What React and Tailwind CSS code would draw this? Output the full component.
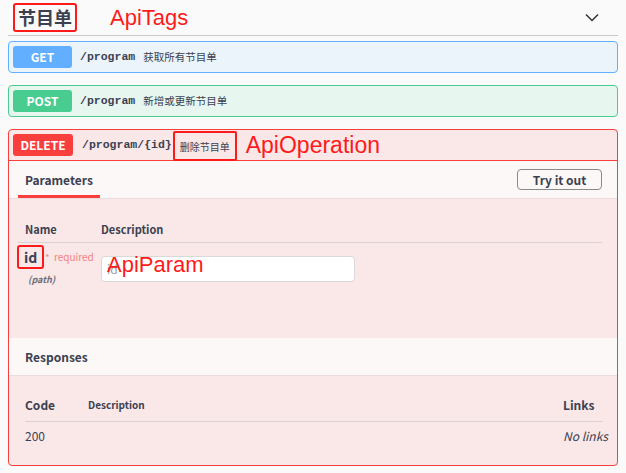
export default function App() {
  const Row = ({ method, path, desc, border, bg, badge }) => (
    <div className={`flex h-[32px] items-center rounded-[4px] border px-[4px] ${border} ${bg}`}>
      <span className={`flex h-[22px] w-[59px] items-center justify-center rounded-[3px] text-[12px] font-bold text-white ${badge}`}>
        {method}
      </span>
      <span className="ml-[8px] font-['Liberation_Mono',monospace] text-[11.5px] font-bold text-[#3b4151]">{path}</span>
      <span className="ml-[8px] text-[10.5px] text-[#3b4151]">{desc}</span>
    </div>
  );

  return (
    <div className="min-h-[473px] bg-[#fafafa] px-[8px] font-['Noto_Sans_CJK_SC',sans-serif] text-[#3b4151]">
      {/* Tag header */}
      <div className="flex h-[36px] items-center border-b border-[#c8c9cd] pl-[5px] pr-[19px]">
        <span className="rounded-[3px] border-2 border-[#ff1a1a] px-[3px] text-[18px] font-bold leading-[25px] text-[#3b4151]">
          节目单
        </span>
        <span className="ml-[33px] font-['Liberation_Sans',sans-serif] text-[22px] leading-none text-[#ff1a1a]">ApiTags</span>
        <svg className="ml-auto" width="14" height="9" viewBox="0 0 14 9" fill="none">
          <polyline points="1,1.5 7,7.5 13,1.5" stroke="#333" strokeWidth="1.5" />
        </svg>
      </div>

      <div className="mt-[5px] flex flex-col gap-[12px]">
        <Row method="GET" path="/program" desc="获取所有节目单" border="border-[#61affe]" bg="bg-[#ebf3fb]" badge="bg-[#61affe]" />
        <Row method="POST" path="/program" desc="新增或更新节目单" border="border-[#49cc90]" bg="bg-[#e8f6f0]" badge="bg-[#49cc90]" />

        {/* DELETE block */}
        <div className="h-[337px] overflow-hidden rounded-[4px] border border-[#f93e3e] bg-[#fae7e7]">
          <div className="flex h-[31px] items-center border-b border-[#f93e3e] px-[4px]">
            <span className="flex h-[22px] w-[60px] items-center justify-center rounded-[3px] bg-[#f93e3e] text-[12px] font-bold text-white">
              DELETE
            </span>
            <span className="ml-[9px] font-['Liberation_Mono',monospace] text-[11.5px] font-bold text-[#3b4151]">/program/{"{id}"}</span>
            <span className="ml-[1px] flex h-[30px] translate-y-[1px] items-center rounded-[2px] border-2 border-[#ff1a1a] px-[5px] text-[10px] text-[#3b4151]">
              删除节目单
            </span>
            <span className="ml-[9px] font-['Liberation_Sans',sans-serif] text-[23px] leading-none text-[#ff1a1a]">ApiOperation</span>
          </div>

          {/* Tabs */}
          <div className="flex h-[38px] items-stretch border-b border-[#ecdcdd] bg-[#fdf8f8] pl-[9px] pr-[15px]">
            <div className="flex items-center border-b-[3px] border-[#f93e3e] px-[7px] pt-[3px] text-[12px] font-bold">Parameters</div>
            <div className="ml-auto flex items-center">
              <button className="flex h-[21px] w-[85px] items-center justify-center rounded-[4px] border-[1.5px] border-[#8a8a8a] text-[12px] font-bold text-[#3b4151]">
                Try it out
              </button>
            </div>
          </div>

          {/* Parameters */}
          <div className="h-[139px] pl-[9px] pr-[15px] pt-[20px]">
            <div className="flex h-[24px] items-end border-b border-[#d9d0d2] pb-[6px] text-[11px] font-semibold leading-[14px]">
              <span className="w-[83px] pl-[7px]">Name</span>
              <span>Description</span>
            </div>
            <div className="flex">
              <div className="w-[83px]">
                <div className="-ml-[1px] mt-[2px] flex items-center">
                  <span className="rounded-[3px] border-2 border-[#ff1a1a] px-[5px] text-[14px] font-bold leading-[20px] text-[#3b4151]">id</span>
                  <span className="ml-[1px] text-[10px] leading-[12px] text-[#f98181]">
                    <span className="text-[9px]">*</span>&nbsp;&nbsp;required
                  </span>
                </div>
                <div className="mt-[5px] pl-[10px] text-[9px] font-semibold italic leading-[11px] text-[#6b6f7b]">(path)</div>
              </div>
              <div className="relative mt-[12px]">
                <input
                  className="h-[26px] w-[254px] rounded-[4px] border border-[#d9d9d9] bg-white px-[5px] text-[12px] outline-none placeholder:text-[#999]"
                  placeholder="id"
                  readOnly
                />
                <span className="absolute left-[6px] top-[-1px] font-['Liberation_Sans',sans-serif] text-[22px] leading-none text-[#ff1a1a]">
                  ApiParam
                </span>
              </div>
            </div>
          </div>

          {/* Responses header */}
          <div className="flex h-[38px] items-center border-b border-[#ecdcdd] bg-[#fdf8f8] pl-[16px] text-[12px] font-bold">
            Responses
          </div>

          {/* Responses body */}
          <div className="pl-[16px] pr-[14px] pt-[22px]">
            <div className="flex h-[24px] items-end border-b border-[#d9d0d2] pb-[8px] leading-[16px]">
              <span className="w-[63px] text-[12px] font-bold">Code</span>
              <span className="flex-1 text-[10px] font-semibold">Description</span>
              <span className="w-[40px] text-[12px] font-bold">Links</span>
            </div>
            <div className="flex pt-[6px] text-[12px] leading-[16px]">
              <span className="w-[63px]">200</span>
              <span className="flex-1"></span>
              <span className="w-[40px] whitespace-nowrap italic">No links</span>
            </div>
          </div>
        </div>
      </div>
    </div>
  );
}
